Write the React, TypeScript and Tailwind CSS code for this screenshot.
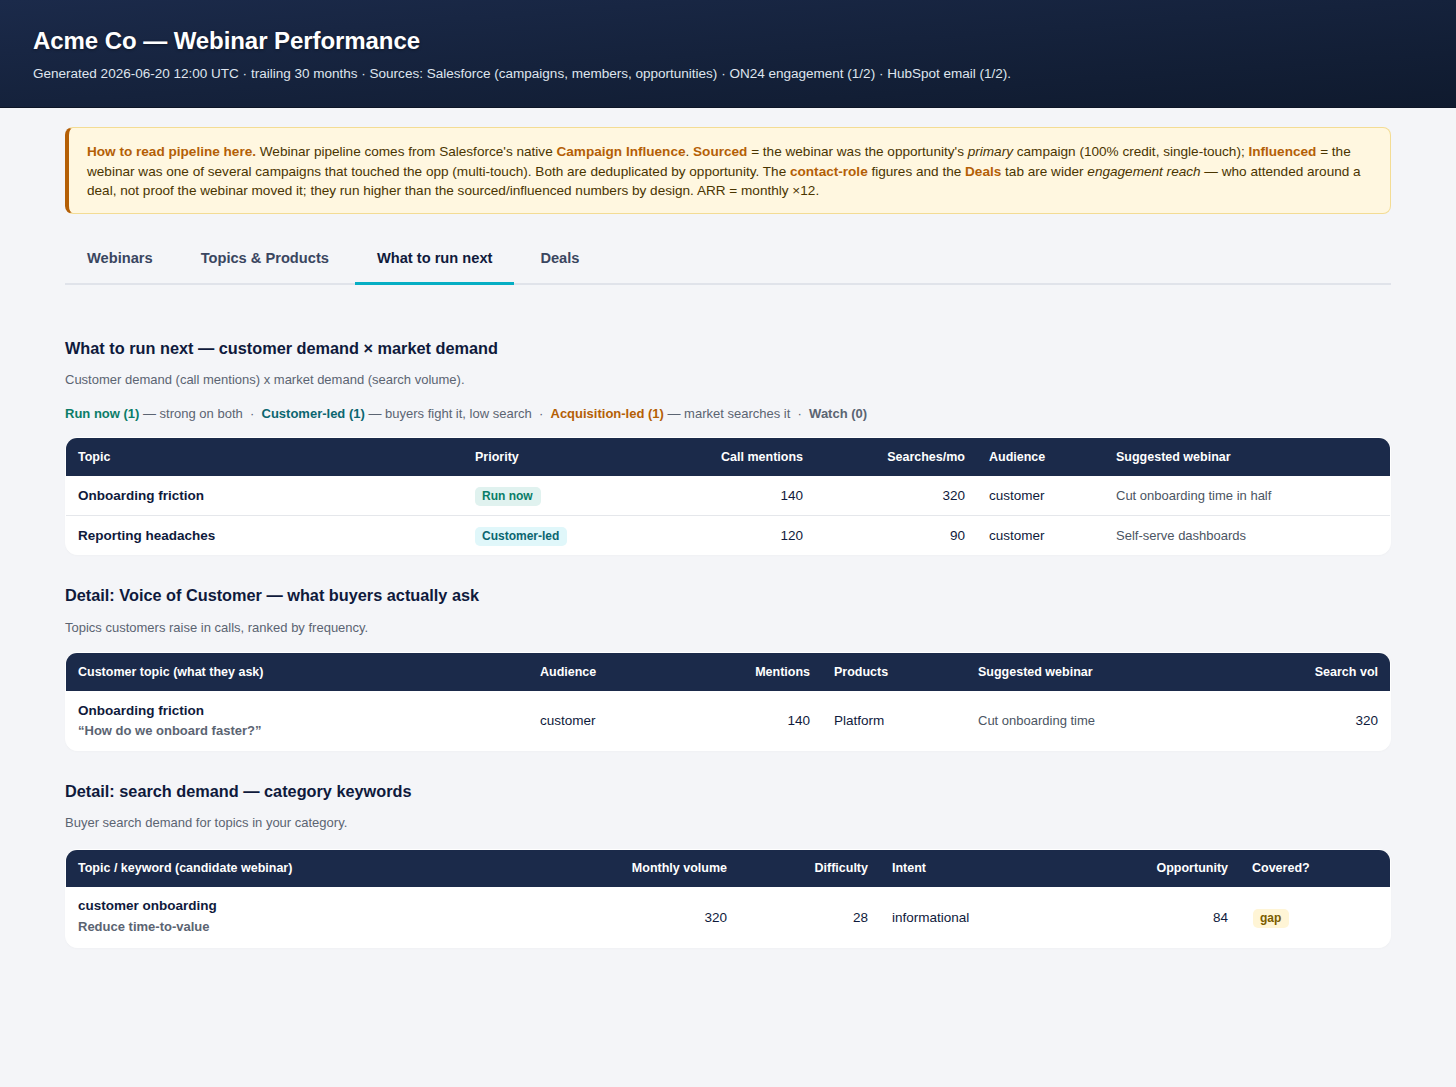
import React from "react";

type Col = { label: string; w: number; right?: boolean };

function Table({ cols, rows, headH, headCls, rowHs, firstCls, restCls }: { cols: Col[]; rows: React.ReactNode[][]; headH: string; headCls: string; rowHs: string[]; firstCls: string; restCls: string }) {
  return (
    <div className="rounded-xl bg-white border border-white overflow-hidden shadow-[0_1px_2px_rgba(15,23,42,0.02)]">
      <table className="w-full table-fixed border-collapse text-[13.5px] text-[#0f1a3c]">
        <colgroup>
          {cols.map((c, i) => (
            <col key={i} style={{ width: c.w }} />
          ))}
        </colgroup>
        <thead>
          <tr className={`bg-[#1b2a4a] ${headH}`}>
            {cols.map((c, i) => (
              <th key={i} className={`px-3 ${headCls} text-[12.5px] font-bold text-white ${c.right ? "text-right" : "text-left"}`}>
                {c.label}
              </th>
            ))}
          </tr>
        </thead>
        <tbody>
          {rows.map((r, ri) => (
            <tr key={ri} className={`${rowHs[ri]} ${ri < rows.length - 1 ? "border-b border-[#e5e7eb]" : ""}`}>
              {r.map((cell, ci) => (
                <td key={ci} className={`px-3 align-middle ${ci === 0 ? firstCls : restCls} ${cols[ci].right ? "text-right" : "text-left"}`}>
                  {cell}
                </td>
              ))}
            </tr>
          ))}
        </tbody>
      </table>
    </div>
  );
}

function Badge({ cls, children }: { cls: string; children: React.ReactNode }) {
  return <span className={`inline-block rounded-[5px] pl-[7px] pr-[8px] py-[2px] text-[12px] leading-[15px] font-bold ${cls}`}>{children}</span>;
}

function Section({ title, sub, subGap, children }: { title: string; sub: string; subGap: string; children: React.ReactNode }) {
  return (
    <section>
      <h2 className="text-[16.3px] leading-[20px] font-bold text-[#0f1a3c]">{title}</h2>
      <p className={`${subGap} text-[13px] leading-[18px] text-[#5b6472]`}>{sub}</p>
      {children}
    </section>
  );
}

const Name = ({ children }: { children: React.ReactNode }) => <div className="font-bold leading-[16px] text-[#0f1a3c]">{children}</div>;
const Gray = ({ children }: { children: React.ReactNode }) => <span className="text-[13px] text-[#4b5563]">{children}</span>;
const Sub = ({ children }: { children: React.ReactNode }) => <div className="mt-[4.5px] text-[13px] leading-[16px] font-bold text-[#5b6472]">{children}</div>;
const Am = ({ children }: { children: React.ReactNode }) => <b className="font-bold text-[#b45f06]">{children}</b>;

export default function App() {
  return (
    <div className="min-h-[1087px] bg-[#f4f5f8] font-['Liberation_Sans',Arial,sans-serif]">
      <header className="h-[108px] bg-gradient-to-br from-[#1b2a4a] to-[#0f1a2e] border-b border-[#0d1526] px-[33px] pt-[26px]">
        <h1 className="text-[24px] leading-[30px] font-bold tracking-[-0.07px] text-white [text-shadow:0_1px_3px_rgba(0,0,0,0.4)]">Acme Co — Webinar Performance</h1>
        <p className="mt-[9px] text-[13.53px] leading-[18px] text-[#dfe5ee]">
          Generated 2026-06-20 12:00 UTC · trailing 30 months · Sources: Salesforce (campaigns, members, opportunities) · ON24 engagement (1/2) · HubSpot email (1/2).
        </p>
      </header>
      <main className="mx-[65px] w-[1326px] pt-[19px]">
        <div className="rounded-lg border border-[#f3dc94] border-l-4 border-l-[#b45f06] bg-[#fff7e0] pl-[18px] pr-[18px] pt-[14px] pb-[12px] text-[13.58px] leading-[19.5px] text-[#4a3500]">
          <Am>How to read pipeline here.</Am> Webinar pipeline comes from Salesforce's native <Am>Campaign Influence</Am>. <Am>Sourced</Am> = the webinar was the opportunity's <i>primary</i> campaign (100% credit, single-touch); <Am>Influenced</Am> = the webinar was one of several campaigns that touched the opp (multi-touch). Both are deduplicated by opportunity. The <Am>contact-role</Am> figures and the <Am>Deals</Am> tab are wider <i>engagement reach</i> — who attended around a deal, not proof the webinar moved it; they run higher than the sourced/influenced numbers by design. ARR = monthly ×12.
        </div>

        <nav className="mt-[14px] flex h-[57px] gap-1 border-b-2 border-[#e0e3ea] text-[14.65px] font-bold text-[#3a4660]">
          <div className="box-border flex h-[57px] items-center border-b-[3px] border-transparent px-[22px] pt-[9px]">Webinars</div>
          <div className="box-border flex h-[57px] items-center border-b-[3px] border-transparent px-[22px] pt-[9px]">Topics &amp; Products</div>
          <div className="box-border flex h-[57px] items-center border-b-[3px] border-[#06aec4] px-[22px] pt-[9px] text-[#0f1a3c]">What to run next</div>
          <div className="box-border flex h-[57px] items-center border-b-[3px] border-transparent px-[22px] pt-[9px]">Deals</div>
        </nav>

        <div className="mt-[53px]">
          <Section subGap="mt-[13px]" title="What to run next — customer demand × market demand" sub="Customer demand (call mentions) x market demand (search volume).">
            <p className="mt-[16px] text-[13px] leading-[18px] text-[#5b6472]">
              <b className="text-[#0a7d68]">Run now (1)</b> — strong on both &nbsp;·&nbsp; <b className="text-[#0b6670]">Customer-led (1)</b> — buyers fight it, low search &nbsp;·&nbsp; <Am>Acquisition-led (1)</Am> — market searches it &nbsp;·&nbsp; <b>Watch (0)</b>
            </p>
            <div className="mt-[14px]">
              <Table
                headH="h-[38px]"
                headCls="pt-[2px]"
                rowHs={["h-[40px]", "h-[38px]"]}
                firstCls="pt-[2px]"
                restCls="pt-[2px]"
                cols={[
                  { label: "Topic", w: 397 },
                  { label: "Priority", w: 240 },
                  { label: "Call mentions", w: 112, right: true },
                  { label: "Searches/mo", w: 162, right: true },
                  { label: "Audience", w: 127 },
                  { label: "Suggested webinar", w: 286 },
                ]}
                rows={[
                  [<Name>Onboarding friction</Name>, <Badge cls="bg-[#e0f2ef] text-[#0a7d68]">Run now</Badge>, "140", "320", "customer", <Gray>Cut onboarding time in half</Gray>],
                  [<Name>Reporting headaches</Name>, <Badge cls="bg-[#e0f7fa] text-[#0b6670]">Customer-led</Badge>, "120", "90", "customer", <Gray>Self-serve dashboards</Gray>],
                ]}
              />
            </div>
          </Section>
        </div>

        <div className="mt-[30px]">
          <Section subGap="mt-[14px]" title="Detail: Voice of Customer — what buyers actually ask" sub="Topics customers raise in calls, ranked by frequency.">
            <div className="mt-[15px]">
              <Table
                headH="h-[38px]"
                headCls="pt-[2px]"
                rowHs={["h-[59px]"]}
                firstCls="pt-[2px]"
                restCls="pt-[3px]"
                cols={[
                  { label: "Customer topic (what they ask)", w: 462 },
                  { label: "Audience", w: 150 },
                  { label: "Mentions", w: 144, right: true },
                  { label: "Products", w: 144 },
                  { label: "Suggested webinar", w: 284 },
                  { label: "Search vol", w: 140, right: true },
                ]}
                rows={[
                  [<><Name>Onboarding friction</Name><Sub>“How do we onboard faster?”</Sub></>, "customer", "140", "Platform", <Gray>Cut onboarding time</Gray>, "320"],
                ]}
              />
            </div>
          </Section>
        </div>

        <div className="mt-[30px]">
          <Section subGap="mt-[13px]" title="Detail: search demand — category keywords" sub="Buyer search demand for topics in your category.">
            <div className="mt-[17px]">
              <Table
                headH="h-[37px]"
                headCls=""
                rowHs={["h-[60px]"]}
                firstCls=""
                restCls="pt-[3px]"
                cols={[
                  { label: "Topic / keyword (candidate webinar)", w: 494 },
                  { label: "Monthly volume", w: 179, right: true },
                  { label: "Difficulty", w: 141, right: true },
                  { label: "Intent", w: 220 },
                  { label: "Opportunity", w: 140, right: true },
                  { label: "Covered?", w: 150 },
                ]}
                rows={[
                  [<><Name>customer onboarding</Name><Sub>Reduce time-to-value</Sub></>, "320", "28", "informational", "84", <Badge cls="ml-px bg-[#fff5d6] text-[#7a5c00]">gap</Badge>],
                ]}
              />
            </div>
          </Section>
        </div>
      </main>
    </div>
  );
}
